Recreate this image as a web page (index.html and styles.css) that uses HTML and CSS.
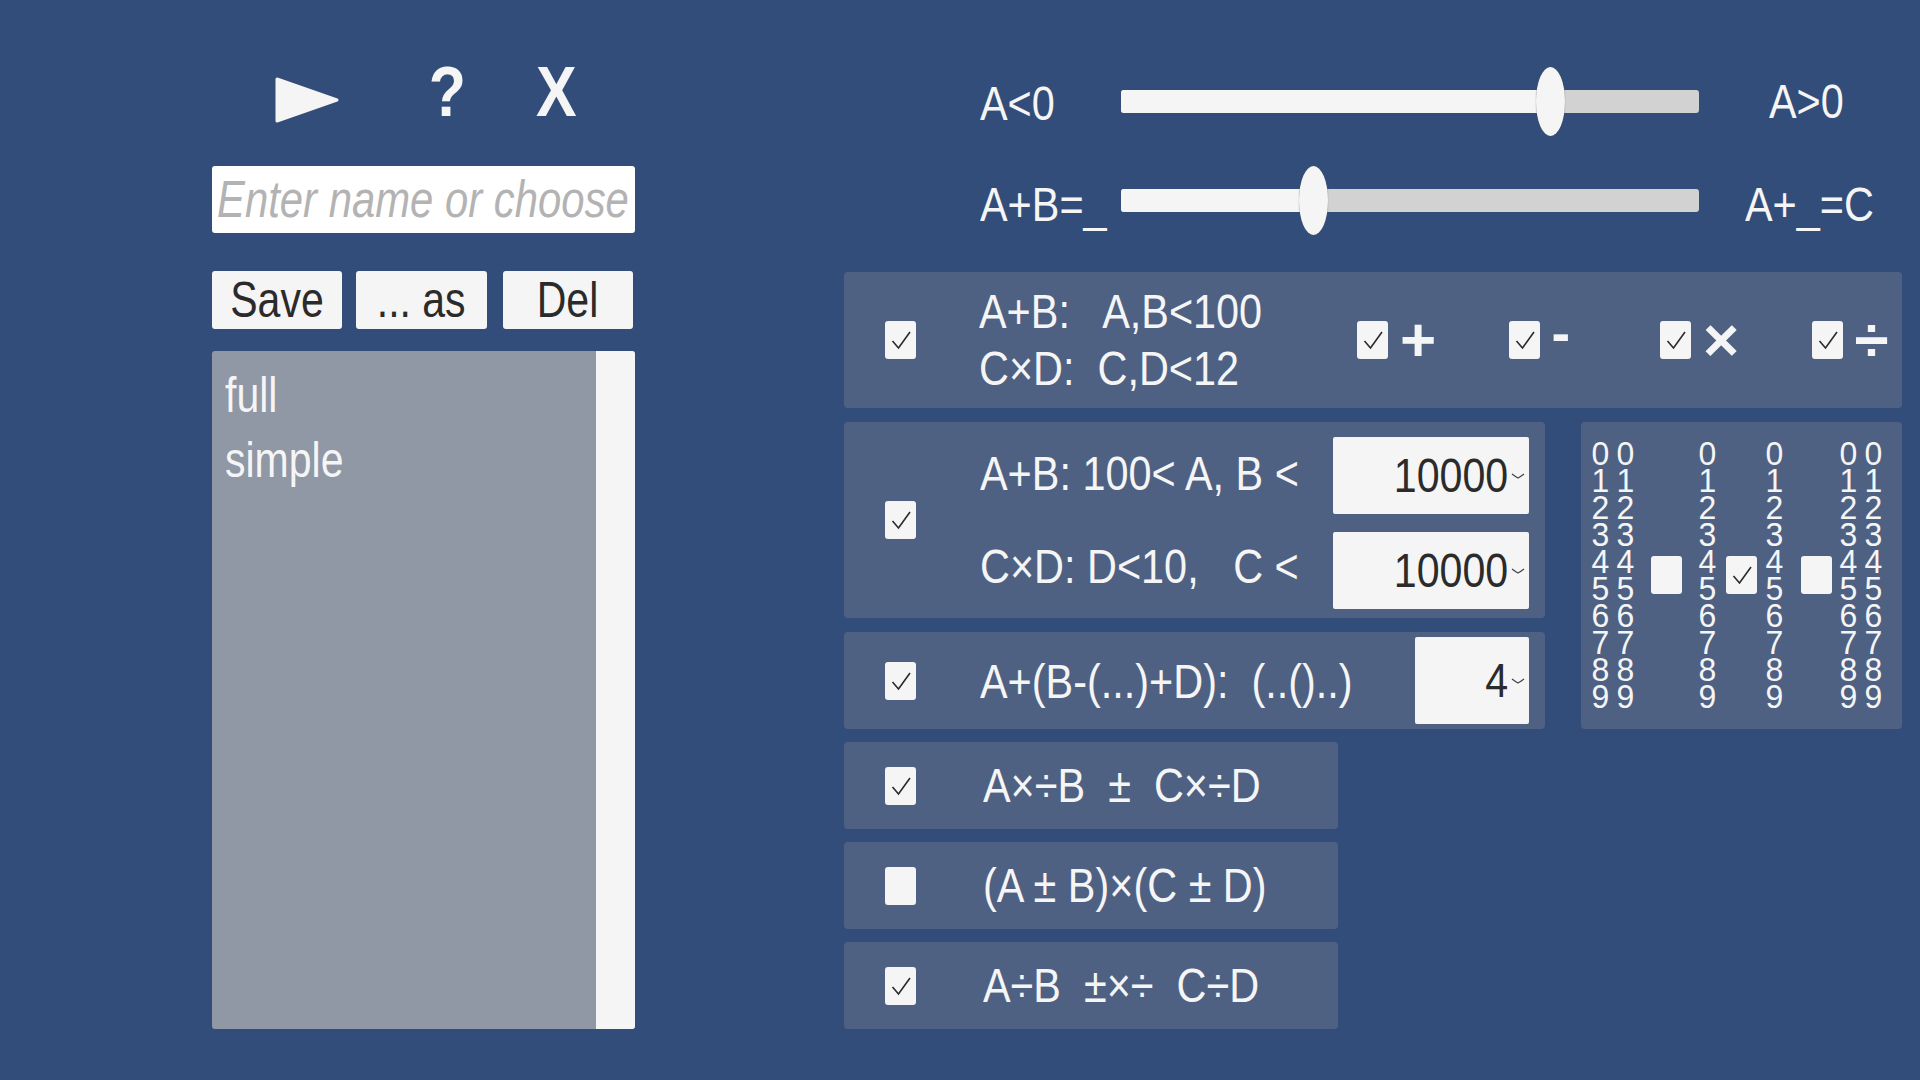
FILE: index.html
```html
<!DOCTYPE html>
<html lang="en">
<head>
  <meta charset="UTF-8" />
  <title>Arithmetic Settings</title>
  <link rel="stylesheet" href="styles.css">
</head>
<body>
  <svg class="defs" width="0" height="0">
    <symbol id="check" viewBox="0 0 31 38">
      <path d="M7.5 20 L13.5 27 L25 11" fill="none" stroke="#2a2a2a" stroke-width="1.6"/>
    </symbol>
    <symbol id="chev" viewBox="0 0 14 6">
      <path d="M1 1 Q5 4 7 5 Q9 4 13 1" fill="none" stroke="#444" stroke-width="1.2"/>
    </symbol>
  </svg>

  <!-- Left: presets -->
  <div class="left">
    <div class="toolbar">
      <svg class="play" width="64" height="46" viewBox="0 0 64 46">
        <path d="M2 2 L62 23 L2 44 Z" fill="#f5f5f5" stroke="#f5f5f5" stroke-width="3" stroke-linejoin="round"/>
      </svg>
      <span class="tool tool-help">?</span>
      <span class="tool tool-close">X</span>
    </div>
    <div class="name-input"><span class="sq placeholder">Enter name or choose</span></div>
    <div class="buttons">
      <button class="btn btn-save"><span class="sq-c">Save</span></button>
      <button class="btn btn-as"><span class="sq-c">... as</span></button>
      <button class="btn btn-del"><span class="sq-c">Del</span></button>
    </div>
    <div class="list">
      <div class="list-items">
        <div class="list-item"><span class="sq">full</span></div>
        <div class="list-item"><span class="sq">simple</span></div>
      </div>
      <div class="list-thumb"></div>
    </div>
  </div>

  <!-- Right: options -->
  <div class="right">
    <div class="slider-row slider-row-1">
      <div class="slider-label"><span class="sq">A&lt;0</span></div>
      <div class="track"><div class="fill fill-1"><div class="knob"></div></div></div>
      <div class="slider-end end-1"><span class="sq">A&gt;0</span></div>
    </div>
    <div class="slider-row slider-row-2">
      <div class="slider-label"><span class="sq">A+B=_</span></div>
      <div class="track"><div class="fill fill-2"><div class="knob"></div></div></div>
      <div class="slider-end end-2"><span class="sq">A+_=C</span></div>
    </div>

    <div class="panel panel-ops">
      <div class="cb"><svg><use href="#check"/></svg></div>
      <div class="ops-text">
        <div class="sq-line"><span class="sq">A+B:   A,B&lt;100</span></div>
        <div class="sq-line"><span class="sq">C×D:  C,D&lt;12</span></div>
      </div>
      <div class="ops">
        <div class="op"><div class="cb"><svg><use href="#check"/></svg></div><span class="op-sign">+</span></div>
        <div class="op"><div class="cb"><svg><use href="#check"/></svg></div><span class="op-sign op-minus">-</span></div>
        <div class="op"><div class="cb"><svg><use href="#check"/></svg></div><span class="op-sign">×</span></div>
        <div class="op"><div class="cb"><svg><use href="#check"/></svg></div><span class="op-sign">÷</span></div>
      </div>
    </div>

    <div class="middle">
      <div class="middle-left">
        <div class="panel panel-big">
          <div class="cb"><svg><use href="#check"/></svg></div>
          <div class="big-rows">
            <div class="big-row">
              <div class="big-label"><span class="sq">A+B: 100&lt; A, B &lt;</span></div>
              <div class="select"><span class="sq-r">10000</span><svg class="chev"><use href="#chev"/></svg></div>
            </div>
            <div class="big-row">
              <div class="big-label big-label-2"><span class="sq">C×D: D&lt;10,   C &lt;</span></div>
              <div class="select"><span class="sq-r">10000</span><svg class="chev"><use href="#chev"/></svg></div>
            </div>
          </div>
        </div>
        <div class="panel panel-paren">
          <div class="cb"><svg><use href="#check"/></svg></div>
          <div class="paren-label"><span class="sq">A+(B-(...)+D):  (..()..)</span></div>
          <div class="select select-small"><span class="sq-r">4</span><svg class="chev"><use href="#chev"/></svg></div>
        </div>
      </div>
      <div class="panel panel-digits">
        <div class="digit-col">0<br>1<br>2<br>3<br>4<br>5<br>6<br>7<br>8<br>9</div>
        <div class="digit-col">0<br>1<br>2<br>3<br>4<br>5<br>6<br>7<br>8<br>9</div>
        <div class="cb"></div>
        <div class="digit-col">0<br>1<br>2<br>3<br>4<br>5<br>6<br>7<br>8<br>9</div>
        <div class="cb"><svg><use href="#check"/></svg></div>
        <div class="digit-col">0<br>1<br>2<br>3<br>4<br>5<br>6<br>7<br>8<br>9</div>
        <div class="cb cb-last"></div>
        <div class="digit-col">0<br>1<br>2<br>3<br>4<br>5<br>6<br>7<br>8<br>9</div>
        <div class="digit-col">0<br>1<br>2<br>3<br>4<br>5<br>6<br>7<br>8<br>9</div>
      </div>
    </div>

    <div class="panel panel-row">
      <div class="cb"><svg><use href="#check"/></svg></div>
      <div class="row-label"><span class="sq">A×÷B  ±  C×÷D</span></div>
    </div>
    <div class="panel panel-row">
      <div class="cb"></div>
      <div class="row-label"><span class="sq">(A ± B)×(C ± D)</span></div>
    </div>
    <div class="panel panel-row">
      <div class="cb"><svg><use href="#check"/></svg></div>
      <div class="row-label"><span class="sq">A÷B  ±×÷  C÷D</span></div>
    </div>
  </div>
</body>
</html>
```

FILE: styles.css
```css
body {
  margin: 0;
  width: 1920px;
  height: 1080px;
  overflow: hidden;
  display: flex;
  background-color: #324d79;
  font-family: "Liberation Sans", Arial, sans-serif;
  font-size: 49px;
  color: #f5f5f5;
}

.defs {
  position: absolute;
}

/* squeezed text, the original is stretched tall */
.sq, .sq-c, .sq-r {
  display: inline-block;
  white-space: pre;
  transform: scaleX(0.82);
}

.sq {
  transform-origin: left center;
}

.sq-r {
  transform-origin: right center;
}

.right .sq {
  transform: scaleX(0.845);
}

.right .sq-r {
  transform: scaleX(0.84);
}

/* left column */
.left {
  width: 423px;
  margin-left: 212px;
  padding-top: 60px;
}

.toolbar {
  height: 65px;
  margin-bottom: 41px;
  display: flex;
  align-items: center;
}

.play {
  margin-left: 63px;
  margin-top: 14px;
}

.tool {
  font-size: 70px;
  font-weight: bold;
  line-height: 65px;
  display: block;
  transform: scaleX(0.87);
}

.tool-help {
  margin-left: 87px;
}

.tool-close {
  margin-left: 64px;
}

.name-input {
  height: 67px;
  line-height: 66px;
  background-color: #fff;
  border-radius: 3px;
  padding-left: 5px;
  margin-bottom: 38px;
}

.left .placeholder {
  font-style: italic;
  font-size: 52px;
  color: #b3b3b3;
  transform: scaleX(0.805);
}

.buttons {
  display: flex;
  margin-bottom: 22px;
}

.btn {
  width: 130px;
  height: 58px;
  padding: 0;
  border: none;
  border-radius: 3px;
  background-color: #f5f5f5;
  color: #2b2b2b;
  font-family: inherit;
  font-size: 50px;
  line-height: 58px;
}

.btn-as {
  margin-left: 14px;
  width: 131px;
}

.btn-del {
  margin-left: 16px;
}

.list {
  height: 678px;
  display: flex;
  border-radius: 3px;
  overflow: hidden;
  background-color: #9097a5;
}

.list-items {
  flex: 1;
  padding: 12px 0 0 13px;
}

.list-item {
  height: 65px;
  line-height: 65px;
  font-size: 50px;
}

.list-thumb {
  width: 39px;
  background-color: #f5f5f5;
}

/* right column */
.right {
  width: 1058px;
  margin-left: 209px;
  display: flex;
  flex-direction: column;
}

.slider-row {
  display: flex;
  align-items: center;
  height: 70px;
}

.slider-row-1 {
  margin-top: 66px;
  margin-bottom: 29px;
}

.slider-row-2 {
  margin-bottom: 37px;
}

.slider-label {
  width: 277px;
  padding-left: 136px;
  box-sizing: border-box;
}

.slider-row-1 .slider-label {
  padding-top: 4px;
}

.slider-row-2 .slider-label, .slider-row-2 .slider-end {
  padding-top: 8px;
}

.track {
  width: 578px;
  height: 23px;
  flex: none;
  border-radius: 3px;
  background-color: #d2d2d2;
}

.fill {
  position: relative;
  height: 100%;
  border-radius: 3px 0 0 3px;
  background-color: #f5f5f5;
}

.fill-1 {
  width: 430px;
}

.fill-2 {
  width: 193px;
}

.knob {
  position: absolute;
  right: -14px;
  top: -23px;
  width: 29px;
  height: 69px;
  border-radius: 50%;
  background-color: #f5f5f5;
  box-shadow: 0 0 1px #666;
}

.slider-end {
  white-space: nowrap;
}

.end-1 {
  margin-left: 70px;
}

.end-2 {
  margin-left: 46px;
}

.panel {
  background-color: #4f6183;
  border-radius: 4px;
}

.cb {
  width: 31px;
  height: 38px;
  flex: none;
  border-radius: 3px;
  background-color: #f5f5f5;
}

.cb svg {
  display: block;
  width: 31px;
  height: 38px;
}

.panel-ops {
  height: 136px;
  margin-bottom: 14px;
  display: flex;
  align-items: center;
  padding-left: 41px;
}

.ops-text {
  width: 378px;
  margin-left: 63px;
  flex: none;
}

.sq-line {
  height: 57px;
  line-height: 57px;
}

.ops {
  display: flex;
}

.op {
  width: 151.5px;
  display: flex;
  align-items: center;
}

.op-sign {
  margin-left: 12px;
  font-size: 62px;
  font-weight: bold;
  line-height: 38px;
}

.op-minus {
  margin-top: -14px;
  font-size: 56px;
}

.middle {
  display: flex;
  justify-content: space-between;
  margin-bottom: 13px;
}

.middle-left {
  width: 701px;
}

.panel-big {
  height: 196px;
  margin-bottom: 14px;
  display: flex;
  align-items: center;
  padding-left: 41px;
}

.big-rows {
  flex: 1;
  min-width: 0;
  margin-left: 64px;
  margin-top: 6px;
  padding-right: 16px;
  display: flex;
  flex-direction: column;
  gap: 18px;
}

.big-row {
  display: flex;
  align-items: center;
}

.big-label {
  flex: 1;
  min-width: 0;
  padding-bottom: 5px;
}

.big-label-2 {
  padding-bottom: 10px;
}

.select {
  width: 196px;
  height: 77px;
  flex: none;
  line-height: 77px;
  display: flex;
  justify-content: flex-end;
  align-items: center;
  padding-right: 4px;
  box-sizing: border-box;
  border-radius: 2px;
  background-color: #f5f5f5;
  color: #2b2b2b;
}

.chev {
  width: 14px;
  height: 6px;
  margin-left: 3px;
}

.panel-paren {
  height: 97px;
  display: flex;
  align-items: center;
  padding-left: 41px;
  padding-right: 16px;
}

.paren-label {
  flex: 1;
  min-width: 0;
  margin-left: 64px;
}

.select-small {
  width: 114px;
  height: 87px;
  line-height: 87px;
}

.panel-digits {
  width: 321px;
  height: 307px;
  box-sizing: border-box;
  padding-left: 7px;
  padding-bottom: 2px;
  display: grid;
  grid-template-columns: 25px 25px 57px 25px 42px 25px 49px 25px 25px;
  justify-items: center;
  align-items: center;
}

.digit-col {
  font-size: 34px;
  line-height: 27px;
  text-align: center;
  transform: scaleX(0.94);
}

.cb-last {
  margin-left: 9px;
}

.panel-row {
  width: 494px;
  height: 87px;
  margin-bottom: 13px;
  display: flex;
  align-items: center;
  padding-left: 41px;
  box-sizing: border-box;
}

.row-label {
  margin-left: 67px;
  padding-bottom: 2px;
  white-space: nowrap;
}
```
